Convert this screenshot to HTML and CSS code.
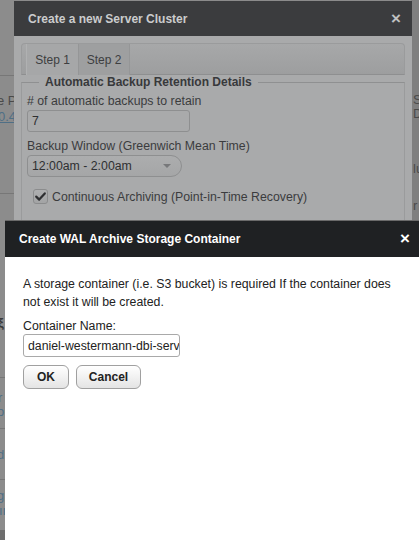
FILE: index.html
```html
<!DOCTYPE html>
<html>
<head>
<meta charset="utf-8">
<link rel="stylesheet" href="styles.css">
</head>
<body>
<div class="page">
  <div class="page-left">
    <div class="pl-line pl-l1"></div>
    <div class="pl-text pl-t1">e P</div>
    <div class="pl-link pl-t2">0.4</div>
    <div class="pl-line pl-l2"></div>
    <div class="pl-text pl-t3">ξ</div>
    <div class="pl-line pl-l3"></div>
    <div class="pl-link pl-t4">r</div>
    <div class="pl-link pl-t5">o</div>
    <div class="pl-line pl-l4"></div>
    <div class="pl-link pl-t6">d</div>
    <div class="pl-line pl-l5"></div>
    <div class="pl-link pl-t7">g</div>
    <div class="pl-link pl-t8">ıı</div>
    <div class="pl-block"></div>
  </div>
  <div class="page-right">
    <div class="pr-text pr-t1">S</div>
    <div class="pr-text pr-t2">D</div>
    <div class="pr-text pr-t3">lu</div>
    <div class="pr-text pr-t4">r</div>
  </div>
</div>

<div class="dialog dlg1">
  <div class="dlg1-title">
    <span>Create a new Server Cluster</span>
    <span class="close1">×</span>
  </div>
  <div class="dlg1-body">
    <div class="tabs">
      <div class="tab tab-active">Step 1</div>
      <div class="tab">Step 2</div>
    </div>
    <fieldset class="fs">
      <legend>Automatic Backup Retention Details</legend>
      <div class="lbl lbl-first"># of automatic backups to retain</div>
      <div class="input1">7</div>
      <div class="lbl lbl-second">Backup Window (Greenwich Mean Time)</div>
      <div class="select1">
        <span>12:00am - 2:00am</span>
        <span class="arrow"></span>
      </div>
      <div class="check-row">
        <span class="checkbox">
          <svg width="15" height="15" viewBox="0 0 15 15"><path d="M3.2 7.6 L6.2 10.6 L11.8 4.4" fill="none" stroke="#2e2f31" stroke-width="2.2" stroke-linecap="round" stroke-linejoin="round"/></svg>
        </span>
        <span class="check-label">Continuous Archiving (Point-in-Time Recovery)</span>
      </div>
    </fieldset>
  </div>
</div>

<div class="dialog dlg2">
  <div class="dlg2-title">
    <span>Create WAL Archive Storage Container</span>
    <span class="close2">×</span>
  </div>
  <div class="dlg2-body">
    <p class="msg">A storage container (i.e. S3 bucket) is required If the container does not exist it will be created.</p>
    <div class="lbl2">Container Name:</div>
    <div class="input2">daniel-westermann-dbi-services</div>
    <div class="btns">
      <div class="btn btn-ok">OK</div>
      <div class="btn btn-cancel">Cancel</div>
    </div>
  </div>
</div>
</body>
</html>
```
FILE: styles.css
```css
* { box-sizing: border-box; }
html, body { margin: 0; padding: 0; }
body {
  width: 419px;
  height: 540px;
  overflow: hidden;
  position: relative;
  background: #8b8b8b;
  font-family: "Liberation Sans", Arial, sans-serif;
  font-size: 12.3px;
}
.page { position: absolute; inset: 0; }
.page-left { position: absolute; left: 0; top: 0; width: 14px; height: 540px; background: #8c8c8c; overflow: hidden; }
.page-right { position: absolute; right: 0; top: 0; width: 8px; height: 540px; background: #7f7f7f; overflow: hidden; }
.pl-line { position: absolute; left: 0; width: 14px; height: 1px; background: #777; }
.pl-l1 { top: 75px; }
.pl-l2 { top: 193px; }
.pl-l3 { top: 377px; }
.pl-l4 { top: 428px; }
.pl-l5 { top: 479px; }
.pl-block { position: absolute; left: 0; top: 530px; width: 5px; height: 10px; background: #6e6e6e; }
.pl-text, .pl-link, .pr-text { position: absolute; font-size: 13px; line-height: 15px; white-space: nowrap; }
.pl-text { color: #4a4a4a; }
.pl-link { color: #4f6f86; }
.pl-t1 { left: -3px; top: 93px; }
.pl-t2 { left: -2px; top: 109px; text-decoration: underline; }
.pl-t3 { left: -2px; top: 315px; color: #3a3a3a; font-weight: bold; }
.pl-t4 { left: -2px; top: 390px; }
.pl-t5 { left: -3px; top: 404px; }
.pl-t6 { left: -3px; top: 447px; }
.pl-t7 { left: -3px; top: 488px; }
.pl-t8 { left: -1px; top: 503px; }
.pr-text { color: #4a4a4a; left: 2px; }
.pr-t1 { top: 92px; }
.pr-t2 { top: 106px; }
.pr-t3 { top: 161px; }
.pr-t4 { top: 198px; }

.dialog { position: absolute; }
.dlg1 {
  left: 14px; top: 1px; width: 398px; height: 240px;
  background: #a9aaab;
}
.dlg1-title {
  height: 35px;
  background: #3b3c3e;
  color: #cbcccd;
  font-weight: bold;
  font-size: 12px;
  display: flex;
  align-items: center;
  justify-content: space-between;
  padding: 0 11px 0 14px;
}
.close1 { font-size: 17px; color: #c0c1c2; }
.dlg1-body { padding: 7px 7px 0 7px; }
.tabs {
  height: 32px;
  border: 1px solid #9a9b9c;
  border-bottom: 1px solid #8e8f90;
  border-radius: 4px 4px 0 0;
  background: linear-gradient(#a7a8a9, #9d9e9f);
  display: flex;
  padding: 0 0 0 4px;
}
.tab {
  width: 52px;
  height: 31px;
  display: flex;
  align-items: center;
  justify-content: center;
  color: #3d3e40;
  font-size: 12px;
  border-left: 1px solid #959697;
  background: #9e9fa0;
}
.tab-active { background: #a6a7a8; border-left: 1px solid #b0b1b2; }
.tab + .tab { border-right: 1px solid #959697; }
.fs {
  margin: 0;
  padding: 0 0 0 5px;
  border: 0;
  border-top: 1px solid #8f9091;
  border-left: 1px solid #9a9b9c;
  border-right: 1px solid #9a9b9c;
  height: 200px;
  min-width: 0;
  color: #3b3c3e;
}
.fs legend {
  font-weight: bold;
  color: #38393b;
  padding: 0 6px;
  margin-left: 12px;
  font-size: 12px;
}
.lbl { line-height: 14px; }
.lbl-first { margin-top: 5px; }
.lbl-second { margin-top: 7px; }
.input1 {
  width: 163px; height: 22px;
  border: 1px solid #8e8f90;
  border-radius: 3px;
  margin-top: 2px;
  padding: 3px 4px;
  line-height: 15px;
  color: #2f3032;
}
.select1 {
  width: 155px; height: 22px;
  border: 1px solid #8e8f90;
  border-radius: 4px 11px 11px 4px;
  margin-top: 2px;
  padding: 0 0 0 4px;
  display: flex;
  align-items: center;
  justify-content: space-between;
  color: #2f3032;
  background: linear-gradient(#acadae, #a5a6a7);
}
.arrow {
  width: 0; height: 0;
  border-left: 4px solid transparent;
  border-right: 4px solid transparent;
  border-top: 4px solid #77787a;
  margin-right: 10px;
}
.check-row {
  display: flex;
  align-items: center;
  margin-top: 12px;
  padding-left: 6px;
  gap: 4px;
}
.checkbox {
  width: 15px; height: 15px;
  border: 1px solid #8b8c8d;
  border-radius: 3px;
  background: linear-gradient(#aeafb0, #a3a4a5);
  display: flex; align-items: center; justify-content: center;
}
.checkbox svg { display: block; margin: -1px; }
.check-label { color: #3b3c3e; }

.dlg2 {
  left: 5px; top: 220px; width: 420px; height: 330px;
  background: #ffffff;
  border-top: 1px solid #6a6a6a;
}
.dlg2-title {
  height: 36px;
  background: #1f2123;
  color: #ffffff;
  font-weight: bold;
  font-size: 12px;
  display: flex;
  align-items: center;
  justify-content: space-between;
  padding: 0 15px 0 14px;
}
.close2 { font-size: 17px; font-weight: bold; }
.dlg2-body { padding: 18px 18px; color: #222; }
.msg { margin: 0; line-height: 18px; width: 372px; }
.lbl2 { margin-top: 8px; line-height: 14px; }
.input2 {
  width: 157px; height: 23px;
  border: 1px solid #a9a9a9;
  border-radius: 3px;
  padding: 3px 4px;
  white-space: nowrap;
  overflow: hidden;
  margin-top: 1px;
  line-height: 16px;
}
.btns { display: flex; gap: 7px; margin-top: 8px; }
.btn {
  height: 24px;
  border: 1px solid #a0a0a0;
  border-radius: 6px;
  background: linear-gradient(#ffffff, #e4e4e4);
  font-weight: bold;
  font-size: 12px;
  display: flex; align-items: center; justify-content: center;
  color: #222;
}
.btn-ok { width: 46px; }
.btn-cancel { width: 65px; }
```
